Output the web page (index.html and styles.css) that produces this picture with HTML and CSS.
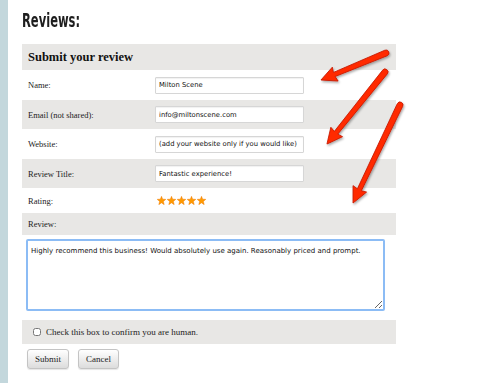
FILE: index.html
```html
<!DOCTYPE html>
<html lang="en">
<head>
    <meta charset="UTF-8">
    <title>Reviews</title>
    <link rel="stylesheet" href="styles.css">
</head>
<body>

    <div class="page">
        <h2 class="title">Reviews:</h2>

        <form class="review-form">
            <div class="form-head">Submit your review</div>

            <div class="row tall">
                <label>Name:</label>
                <input type="text" value="Milton Scene">
            </div>
            <div class="row shade">
                <label>Email (not shared):</label>
                <input type="text" value="info@miltonscene.com">
            </div>
            <div class="row tall">
                <label>Website:</label>
                <input type="text" value="(add your website only if you would like)">
            </div>
            <div class="row shade">
                <label>Review Title:</label>
                <input type="text" value="Fantastic experience!">
            </div>
            <div class="row rating">
                <label>Rating:</label>
                <div class="stars">
                    <svg width="9" height="9" viewBox="0 0 10 10"><polygon points="5,0.3 6.3,3.5 9.8,3.7 7.1,6 8,9.6 5,7.6 2,9.6 2.9,6 0.2,3.7 3.7,3.5" /></svg>
                    <svg width="9" height="9" viewBox="0 0 10 10"><polygon points="5,0.3 6.3,3.5 9.8,3.7 7.1,6 8,9.6 5,7.6 2,9.6 2.9,6 0.2,3.7 3.7,3.5" /></svg>
                    <svg width="9" height="9" viewBox="0 0 10 10"><polygon points="5,0.3 6.3,3.5 9.8,3.7 7.1,6 8,9.6 5,7.6 2,9.6 2.9,6 0.2,3.7 3.7,3.5" /></svg>
                    <svg width="9" height="9" viewBox="0 0 10 10"><polygon points="5,0.3 6.3,3.5 9.8,3.7 7.1,6 8,9.6 5,7.6 2,9.6 2.9,6 0.2,3.7 3.7,3.5" /></svg>
                    <svg width="9" height="9" viewBox="0 0 10 10"><polygon points="5,0.3 6.3,3.5 9.8,3.7 7.1,6 8,9.6 5,7.6 2,9.6 2.9,6 0.2,3.7 3.7,3.5" /></svg>
                </div>
            </div>
            <div class="row shade short">
                <label>Review:</label>
            </div>
            <div class="text-wrap">
                <textarea>Highly recommend this business! Would absolutely use again. Reasonably priced and prompt.</textarea>
            </div>
            <div class="row shade check">
                <input type="checkbox" id="human">
                <label for="human">Check this box to confirm you are human.</label>
            </div>
            <div class="buttons">
                <button type="button">Submit</button>
                <button type="button">Cancel</button>
            </div>
        </form>
    </div>

    <!-- red annotation arrows drawn over the form -->
    <svg class="arrows" width="500" height="383" viewBox="0 0 500 383">
        <defs>
            <filter id="shadow" x="-20%" y="-20%" width="140%" height="140%">
                <feDropShadow dx="1" dy="1.5" stdDeviation="1" flood-color="#000" flood-opacity="0.35"/>
            </filter>
        </defs>
        <g filter="url(#shadow)" fill="#ff2a05" stroke="#c81a00" stroke-width="0.8" stroke-linejoin="round">
            <g transform="translate(386 53) rotate(157.45)">
                <path d="M0,-3 L56,-2.2 L55,-7.5 L70.4,0 L55,7.5 L56,2.2 L0,3 A3,3 0 0 1 0,-3 Z"/>
            </g>
            <g transform="translate(385 72) rotate(128.85)">
                <path d="M0,-3 L78,-2.2 L77,-7.5 L92.5,0 L77,7.5 L78,2.2 L0,3 A3,3 0 0 1 0,-3 Z"/>
            </g>
            <g transform="translate(400 105) rotate(115.6)">
                <path d="M0,-3 L94,-2.2 L93,-7.5 L108.7,0 L93,7.5 L94,2.2 L0,3 A3,3 0 0 1 0,-3 Z"/>
            </g>
        </g>
    </svg>

</body>
</html>
```

FILE: styles.css
```css
/* --- Page --- */
body {
    margin: 0;
    background-color: #ffffff;
    font-family: "Liberation Serif", "Times New Roman", serif;
    color: #222;
    min-height: 383px;
    border-left: 8px solid #c3d7dc;
    position: relative;
}

.page {
    padding: 8px 0 0 14px;
    width: 374px;
}

.title {
    margin: 0 0 12px;
    font-family: "DejaVu Sans Condensed", "DejaVu Sans", sans-serif;
    font-weight: bold;
    font-size: 20px;
    line-height: 24px;
    color: #1e1e1e;
    transform: scaleX(0.64);
    transform-origin: left center;
}

/* --- Form table --- */
.review-form {
    margin: 0;
}

.form-head {
    background-color: #e8e7e5;
    height: 26px;
    line-height: 26px;
    padding-left: 6px;
    font-weight: bold;
    font-size: 12.5px;
    color: #111;
}

.row {
    display: grid;
    grid-template-columns: 127px 1fr;
    align-items: center;
    height: 29px;
    padding-left: 6px;
    box-sizing: border-box;
}

.row.tall {
    height: 30px;
}

.row.shade {
    background-color: #e8e7e5;
}

.row.rating {
    height: 25px;
}

.row.short {
    height: 22px;
}

.row label {
    font-size: 8.5px;
    color: #222;
}

.row input[type="text"] {
    width: 149px;
    height: 17px;
    box-sizing: border-box;
    border: 1px solid #d6d6d6;
    border-radius: 1px;
    padding: 0 1px 0 3px;
    font-family: "DejaVu Sans", sans-serif;
    font-size: 6.8px;
    color: #111;
    background-color: #fff;
    box-shadow: inset 0 1px 1px rgba(0, 0, 0, 0.06);
}

/* --- Stars --- */
.stars {
    display: flex;
    gap: 1px;
    padding-left: 2px;
}

.stars svg polygon {
    fill: #ff9a00;
    stroke: #f07800;
    stroke-width: 0.5;
}

/* --- Review text --- */
.text-wrap {
    padding: 4px 11px 9px 4px;
}

.text-wrap textarea {
    display: block;
    width: 359px;
    height: 72px;
    box-sizing: border-box;
    margin: 0;
    border: 2px solid #8cbcf5;
    border-radius: 2px;
    padding: 5px 3px;
    font-family: "DejaVu Sans", sans-serif;
    font-size: 7px;
    line-height: 10px;
    color: #111;
    resize: both;
    outline: none;
}

/* --- Checkbox row --- */
.row.check {
    display: flex;
    height: 24px;
    padding-left: 11px;
    gap: 5px;
}

.row.check input {
    margin: 0;
    width: 8px;
    height: 8px;
}

.row.check label {
    font-size: 9px;
}

/* --- Buttons --- */
.buttons {
    display: flex;
    gap: 9px;
    padding: 5px 0 0 5px;
}

.buttons button {
    height: 20px;
    padding: 0 7px;
    font-family: "Liberation Serif", serif;
    font-size: 9px;
    color: #222;
    border: 1px solid #c4c4c4;
    border-radius: 3px;
    background: linear-gradient(#ffffff, #dcdcdc);
    box-shadow: 0 1px 1px rgba(0, 0, 0, 0.1);
}

/* --- Annotation arrows --- */
.arrows {
    position: absolute;
    top: 0;
    left: 0;
    margin-left: -8px;
    pointer-events: none;
}
```
